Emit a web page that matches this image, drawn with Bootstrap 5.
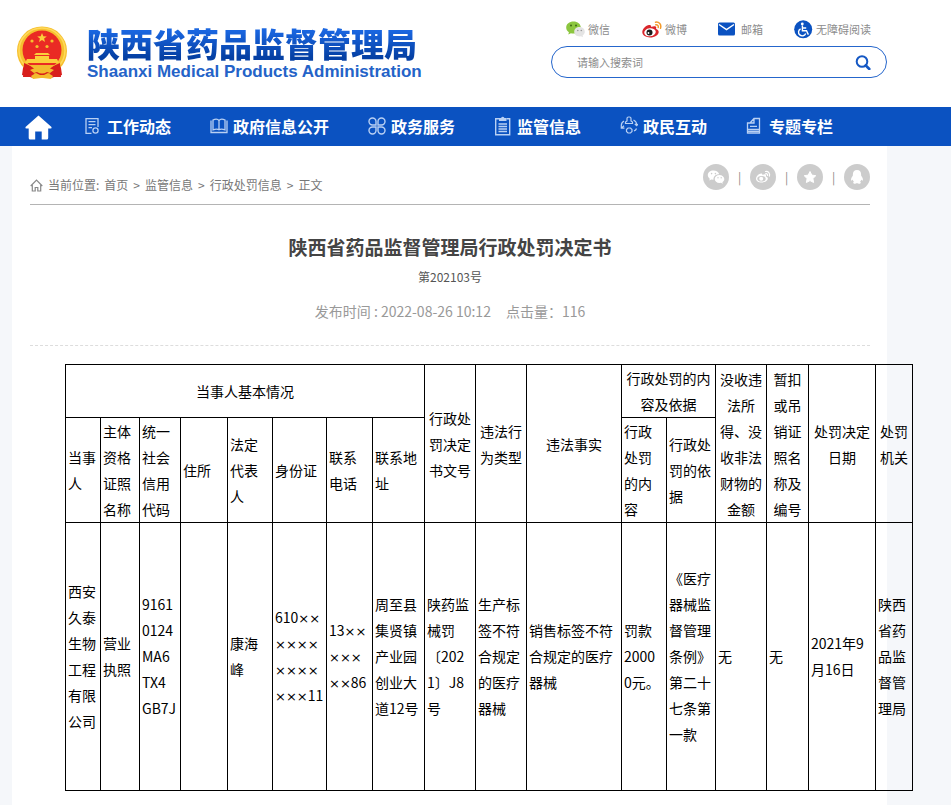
<!DOCTYPE html>
<html lang="zh-CN">
<head>
<meta charset="utf-8">
<meta name="viewport" content="width=device-width, initial-scale=1">
<title>陕西省药品监督管理局行政处罚决定书</title>
<link rel="stylesheet" href="https://cdn.jsdelivr.net/npm/bootstrap@5.3.0/dist/css/bootstrap.min.css">
<style>
:root { --brand: #0b52c1; }
body { font-family: "Noto Sans CJK SC", "Noto Sans", sans-serif; font-size: 14px; background: #f5f7fa; color: #000; }
a { text-decoration: none; color: inherit; }
svg { display: block; flex: none; }
.site-head { padding: 17px 64px 26px 17px; }
.brand-link { gap: 20px; }
.brand-link svg { margin-top: 8px; }
.brand-text { padding-top: 6px; }
.brand-cn { font-size: 33px; font-weight: 900; line-height: 40px; background: linear-gradient(#1a66e0 20%, #0540a4 85%); -webkit-background-clip: text; background-clip: text; color: transparent; }
.brand-en { font-family: "Liberation Sans", Arial, sans-serif; font-size: 17px; font-weight: 700; line-height: 18px; color: #2463c8; }
.head-tools { width: 336px; }
.quick-links { padding-left: 15px; font-size: 11px; line-height: 24px; color: #8c8c8c; }
.quick-links a { width: 76px; gap: 3px; white-space: nowrap; }
.search-box { margin-top: 5px; height: 32px; border: 1px solid #2566cc; border-radius: 16px; padding: 0 15px 0 25px; background: #fff; }
.search-box input { font-size: 11px; padding: 0; border: 0; background: none; box-shadow: none; }
.search-box input:focus { box-shadow: none; background: none; }
.search-box input::placeholder { color: #8c8c8c; }
.main-nav { background: var(--brand); color: #fff; height: 39px; padding: 0 0 2px 25px; gap: 39px; font-size: 16px; font-weight: 700; white-space: nowrap; }
.main-nav .home-link { margin-right: -8px; padding-top: 3px; }
.main-nav a { gap: 5px; }
.sheet { margin: 0 64px 0 12px; padding: 0 17px 14px 18px; }
.crumb-bar { height: 59px; border-bottom: 1px solid #b4b4b4; }
.crumbs { padding-top: 20px; gap: 5px; font-size: 12px; color: #777; }
.share { padding-top: 3px; color: #888; }
.share button { border: 0; padding: 0; background: none; }
.share span { width: 21px; line-height: 26px; font-size: 12px; text-align: center; }
.doc-title { font-size: 19px; font-weight: 700; line-height: 28px; color: #444; margin: 28px 0 0; }
.doc-no { font-size: 12px; line-height: 20px; color: #555; margin: 6px 0 0; }
.doc-meta { font-size: 14px; line-height: 20px; color: #999; margin: 14px 0 0; padding-bottom: 24px; gap: 15px; border-bottom: 1px dashed #ddd; }
.case-table { margin: 18px 0 0 35px; width: 847px; table-layout: fixed; border-collapse: collapse; line-height: 26px; font-size: 14px; white-space: nowrap; }
.case-table th, .case-table td { border: 1px solid #000; padding: 0 2px; font-weight: 400; vertical-align: middle; }
.case-table thead th { text-align: center; }
.case-table thead th.sub { text-align: left; }
.case-table tbody td { height: 268px; padding-bottom: 2px; }
.mask { font-family: "DejaVu Sans", sans-serif; font-size: 13px; line-height: 1; }
.c35{width:35px}.c37{width:37px}.c39{width:39px}.c41{width:41px}.c42{width:42px}.c45{width:45px}.c46{width:46px}.c47{width:47px}.c49{width:49px}.c51{width:51px}.c52{width:52px}.c54{width:54px}.c67{width:67px}.c95{width:95px}
</style>
<script src="https://cdn.jsdelivr.net/npm/bootstrap@5.3.0/dist/js/bootstrap.bundle.min.js"></script>
</head>
<body class="d-flex flex-column min-vh-100">
<header class="site-head bg-white d-flex justify-content-between align-items-start">
  <a href="#" class="brand-link d-flex align-items-start">
    <svg width="50" height="55" viewBox="0 0 50 55" aria-hidden="true">
      <path d="M7 36 5 50l8 2 3 1h18l3-1 8-2-2-14z" fill="#d81f1c"/>
      <ellipse cx="25" cy="26" rx="25" ry="24.500" fill="#f6c02f"/>
      <ellipse cx="25" cy="25.500" rx="23" ry="22.500" fill="none" stroke="#ffd95a" stroke-width="1.500"/>
      <ellipse cx="25" cy="25" rx="19.500" ry="19.500" fill="#ea2a24"/>
      <path d="M7 38q6 2 11 6l7-2 7 2q5-4 11-6l1 14-8 0-4-4-4 5H22l-4-5-4 4-8 0z" fill="#d81f1c"/>
      <path d="m25 8 1.300 3.200 3.500.2-2.700 2.200.9 3.400-3-1.900-3 1.900.9-3.400-2.700-2.200 3.500-.2z" fill="#fbcf3b"/>
      <g fill="#f6c02f"><circle cx="15" cy="16" r="1.600"/><circle cx="35" cy="16" r="1.600"/><circle cx="20" cy="21.500" r="1.600"/><circle cx="30" cy="21.500" r="1.600"/></g>
      <path d="M19 28h12l2 2H17zM18 31h14v3h8l2 4H8l2-4h8z" fill="#fbcf3b"/>
      <path d="M12 40h26l-6 4q-7-4-14 0zM18 43q7-4 14 0l5 2-4 3-3-1q-5 3-10 0l-3 1-4-3zM14 51l5-3 4 2h4l4-2 5 3-2 3-8-1h-2l-8 1z" fill="#f3bb2e"/>
    </svg>
    <span class="brand-text d-flex flex-column">
      <span class="brand-cn">陕西省药品监督管理局</span>
      <span class="brand-en">Shaanxi Medical Products Administration</span>
    </span>
  </a>
  <div class="head-tools">
    <nav class="quick-links d-flex" aria-label="快捷入口">
      <a href="#" class="d-flex align-items-center">
        <svg width="19" height="17" viewBox="0 0 19 17"><path d="M7.500.5C3.400.5.200 3 .200 6.500c0 2 1 3.600 2.700 4.700L2.300 13.500l2.600-1.300c4 1.200 9.500-1 9.900-5.500C14.800 3 11.600.500 7.500.500z" fill="#8cc63f"/><circle cx="5" cy="4.500" r="1" fill="#3d6b14"/><circle cx="10" cy="4.500" r="1" fill="#3d6b14"/><path d="M13.500 6c-3 0-5.300 2-5.300 4.700s2.400 4.700 5.300 4.700l1.500-.2 2 1-.4-1.800c1.300-.9 2.200-2.100 2.200-3.700 0-2.700-2.400-4.700-5.300-4.700z" fill="#e4e4e4"/><circle cx="11.800" cy="9.500" r=".8" fill="#999"/><circle cx="15.300" cy="9.500" r=".8" fill="#999"/></svg>
        <span>微信</span></a>
      <a href="#" class="d-flex align-items-center">
        <svg width="20" height="17" viewBox="0 0 20 17"><path d="M7 4C4 4 .300 8 .300 11.300.300 14.400 4 16.500 8 16.500c5 0 8.700-2.700 8.700-5.500 0-1.800-1.500-2.700-2.700-3 .5-1.200.3-2-.3-2.500-1-.7-3-.2-4.500.4C9.500 4.500 8.500 4 7 4z" fill="#d9252a"/><ellipse cx="8" cy="11.300" rx="5.800" ry="4" fill="#fff" transform="rotate(-8 8 11.300)"/><circle cx="7.500" cy="11.500" r="3" fill="#1c1c1c"/><circle cx="6.500" cy="12" r=".9" fill="#fff"/><path d="M13.500 1.200c3.500-.7 6.200 2.300 5 6M13.800 3.800c1.700-.3 2.900 1 2.400 2.700" fill="none" stroke="#f39a2b" stroke-width="1.500" stroke-linecap="round"/></svg>
        <span>微博</span></a>
      <a href="#" class="d-flex align-items-center">
        <svg width="20" height="14" viewBox="0 0 20 14"><rect y=".5" width="17" height="13" rx="1.500" fill="#0b52c1"/><path d="m1 2.500 7.500 5 7.500-5" fill="none" stroke="#fff" stroke-width="1.500"/></svg>
        <span>邮箱</span></a>
      <a href="#" class="d-flex align-items-center">
        <svg width="19" height="19" viewBox="0 0 19 19"><circle cx="9.200" cy="9.300" r="9" fill="#0b52c1"/><circle cx="8.300" cy="4" r="1.400" fill="#fff"/><path d="M8.400 5.500v5.200h4.100l1.900 3.900M8.500 8h3.700M6.600 8.800a3.700 3.700 0 1 0 5.100 4.600" fill="none" stroke="#fff" stroke-width="1.400"/></svg>
        <span>无障碍阅读</span></a>
    </nav>
    <form class="search-box d-flex align-items-center" role="search">
      <input class="form-control" type="text" placeholder="请输入搜索词" aria-label="请输入搜索词">
      <button type="button" class="btn p-0 border-0" aria-label="搜索"><svg width="16" height="15" viewBox="0 0 16 15"><circle cx="7" cy="6.500" r="5.300" fill="none" stroke="#1558c4" stroke-width="2"/><path d="m10.800 10.500 3.500 3.500" stroke="#1558c4" stroke-width="2.600" stroke-linecap="round"/></svg></button>
    </form>
  </div>
</header>
<nav class="main-nav d-flex align-items-center" aria-label="主导航">
  <a href="#" class="home-link" aria-label="首页"><svg width="28" height="25" viewBox="0 0 28 25"><path d="M13.500.500.500 12q-.5 1.500 1 1.500h2.200V23q0 1.500 1.500 1.500h5V16.500h6.500v8h5q1.500 0 1.500-1.500v-9.500h2.300q1.500 0 1-1.500z" fill="#fff"/></svg></a>
  <a href="#" class="d-flex align-items-center"><svg width="18" height="18" viewBox="0 0 18 18" fill="none" stroke="#b9d0f3" stroke-width="1.300"><path d="M7.500 16.300H2V13.500M2 13.500V1.700h12V10M4.500 4.700h7M4.500 7.700h7M4.500 10.700h3.500"/><circle cx="11.500" cy="13.500" r="2.600"/></svg><span>工作动态</span></a>
  <a href="#" class="d-flex align-items-center"><svg width="18" height="18" viewBox="0 0 18 18" fill="none" stroke="#b9d0f3" stroke-width="1.300"><path d="M1 3.500v12h16v-12M3 12.800V3q4-2 6 .5 2-2.500 6-.5v9.800q-4-1.500-6 0-2-1.500-6 0zM9 3.500v9.500"/></svg><span>政府信息公开</span></a>
  <a href="#" class="d-flex align-items-center"><svg width="18" height="18" viewBox="0 0 18 18" fill="none" stroke="#b9d0f3" stroke-width="1.400"><path d="M8 8H4.500A3.500 3.500 0 1 1 8 4.500zM10 8h3.500A3.500 3.500 0 1 0 10 4.500zM8 10H4.500A3.500 3.500 0 1 0 8 13.500zM10 10h3.500a3.500 3.500 0 1 1-3.500 3.500z"/></svg><span>政务服务</span></a>
  <a href="#" class="d-flex align-items-center"><svg width="18" height="20" viewBox="0 0 18 20" fill="none" stroke="#b9d0f3" stroke-width="1.400"><path d="M5 2.700H1.700v16h14v-16H12.500M4.500 8h8.500M4.500 10.500h8.500M4.500 13h8.500M4.500 15.500h8.500"/><path d="M5 5V2h2q1.700-2.500 3.500 0h2v3z" fill="#b9d0f3" stroke="none"/></svg><span>监管信息</span></a>
  <a href="#" class="d-flex align-items-center"><svg width="18" height="19" viewBox="0 0 18 19" fill="none" stroke="#b9d0f3" stroke-width="1.200"><path d="M5.500 7.500V6l1.500-1V2.500Q7 1 8.500 1h1Q11 1 11 2.500V5l1.500 1v1.500zM6.500 13.500l1.500-1.500h2.500l1.500 1.500v2L10.500 17H8l-1.500-1.500zM13.500 4q3.200 1.500 3.200 5M14.800 8l1.900 1.700L18 8M4 5Q1.300 6.500 1.300 9.500v2.700H4.500M1.300 12.200 4 9.800M14 15q2-.8 2.500-2.500"/></svg><span>政民互动</span></a>
  <a href="#" class="d-flex align-items-center"><svg width="18" height="18" viewBox="0 0 18 18" fill="none" stroke="#b9d0f3" stroke-width="1.300"><path d="M4 6 8 1.500h5.500V16H1.500V6zM4 6h4V1.500M1.500 12.500h12M4 9.300h7M1.500 14.300h12"/></svg><span>专题专栏</span></a>
</nav>
<main class="sheet bg-white flex-grow-1">
  <div class="crumb-bar d-flex justify-content-between align-items-center">
    <nav class="crumbs d-flex align-items-center" aria-label="当前位置">
      <svg width="13" height="13" viewBox="0 0 13 13" fill="none" stroke="#888" stroke-width="1.200"><path d="M.7 7 6.500 1.200 12.300 7M2.300 6v6h2.900V8.500h2.600V12h2.900V6"/></svg>
      <span>当前位置:</span><a href="#">首页</a><span>&gt;</span><a href="#">监管信息</a><span>&gt;</span><a href="#">行政处罚信息</a><span>&gt;</span><span>正文</span>
    </nav>
    <div class="share d-flex align-items-center">
      <button type="button" aria-label="分享到微信"><svg width="26" height="26" viewBox="0 0 26 26"><circle cx="13" cy="13" r="13" fill="#ccc"/><path d="M10.500 6.500c-3.300 0-5.700 2-5.700 4.600 0 1.600.8 2.800 2 3.700l-.5 1.700 2-1 2.200.3c-.3-3.500 2.500-5.600 5.700-5.500-.5-2.200-2.900-3.800-5.700-3.800z" fill="#fff"/><path d="M16.500 11c-2.700 0-4.800 1.700-4.800 4s2.100 4 4.800 4l1.500-.2 1.800 1-.4-1.600c1.200-.8 1.900-1.900 1.900-3.200 0-2.300-2.200-4-4.800-4z" fill="#fff"/><g fill="#ccc"><circle cx="8.600" cy="9.600" r=".8"/><circle cx="12.400" cy="9.600" r=".8"/><circle cx="15" cy="13.800" r=".7"/><circle cx="18.200" cy="13.800" r=".7"/></g></svg></button>
      <span>|</span>
      <button type="button" aria-label="分享到微博"><svg width="26" height="26" viewBox="0 0 26 26"><circle cx="13" cy="13" r="13" fill="#ccc"/><path d="M11 9.500c-2 0-5 2.900-5 5.300 0 2.200 2.600 3.800 5.500 3.800 3.600 0 6.300-1.900 6.300-4 0-1.300-1-2-2-2.200.4-.8.3-1.500-.1-1.800-.8-.6-2.100-.2-3.200.3 0-.9-.5-1.400-1.500-1.400z" fill="#fff"/><ellipse cx="11.500" cy="14.700" rx="4.200" ry="2.800" fill="#ccc"/><circle cx="11.200" cy="14.800" r="2" fill="#fff"/><path d="M15.500 7.500c2.800-.5 4.800 1.800 3.900 4.600M15.800 9.600c1.200-.2 2 .7 1.700 1.900" fill="none" stroke="#fff" stroke-width="1.200" stroke-linecap="round"/></svg></button>
      <span>|</span>
      <button type="button" aria-label="分享到空间"><svg width="26" height="26" viewBox="0 0 26 26"><circle cx="13" cy="13" r="13" fill="#ccc"/><path d="m13 7.500 1.800 3.600 4 .6-2.900 2.800.7 4-3.600-1.900-3.600 1.900.7-4-2.900-2.800 4-.6z" fill="#fff" stroke="#fff" stroke-width="1" stroke-linejoin="round"/></svg></button>
      <span>|</span>
      <button type="button" aria-label="分享到QQ"><svg width="26" height="26" viewBox="0 0 26 26"><circle cx="13" cy="13" r="13" fill="#ccc"/><path d="M13 6c-2.800 0-4.200 2-4.100 4.500l-.1 1.200c-1.300 1.600-1.900 3-1.700 4.700.6.300 1.200-.4 1.600-1 .2.900.6 1.600 1.200 2.200-.8.500-.9 1.400-.2 1.800.9.500 2.500.3 3.300-.4.800.7 2.400.9 3.300.4.700-.4.600-1.300-.2-1.800.6-.6 1-1.300 1.200-2.200.4.600 1 1.300 1.600 1 .2-1.700-.4-3.100-1.700-4.700l-.1-1.200C17.200 8 15.800 6 13 6z" fill="#fff"/></svg></button>
    </div>
  </div>
  <h1 class="doc-title text-center">陕西省药品监督管理局行政处罚决定书</h1>
  <p class="doc-no text-center">第202103号</p>
  <p class="doc-meta d-flex justify-content-center"><span>发布时间 : 2022-08-26 10:12</span><span>点击量：116</span></p>
  <table class="case-table">
    <colgroup><col class="c35"><col class="c39"><col class="c41"><col class="c47"><col class="c45"><col class="c54"><col class="c46"><col class="c52"><col class="c51"><col class="c51"><col class="c95"><col class="c45"><col class="c49"><col class="c51"><col class="c42"><col class="c67"><col class="c37"></colgroup>
    <thead>
      <tr>
        <th colspan="8">当事人基本情况</th>
        <th rowspan="2">行政处<br>罚决定<br>书文号</th>
        <th rowspan="2">违法行<br>为类型</th>
        <th rowspan="2">违法事实</th>
        <th colspan="2">行政处罚的内<br>容及依据</th>
        <th rowspan="2">没收违<br>法所<br>得、没<br>收非法<br>财物的<br>金额</th>
        <th rowspan="2">暂扣<br>或吊<br>销证<br>照名<br>称及<br>编号</th>
        <th rowspan="2">处罚决定<br>日期</th>
        <th rowspan="2">处罚<br>机关</th>
      </tr>
      <tr>
        <th class="sub">当事<br>人</th>
        <th class="sub">主体<br>资格<br>证照<br>名称</th>
        <th class="sub">统一<br>社会<br>信用<br>代码</th>
        <th class="sub">住所</th>
        <th class="sub">法定<br>代表<br>人</th>
        <th class="sub">身份证</th>
        <th class="sub">联系<br>电话</th>
        <th class="sub">联系地<br>址</th>
        <th class="sub">行政<br>处罚<br>的内<br>容</th>
        <th class="sub">行政处<br>罚的依<br>据</th>
      </tr>
    </thead>
    <tbody>
      <tr>
        <td>西安<br>久泰<br>生物<br>工程<br>有限<br>公司</td>
        <td>营业<br>执照</td>
        <td>9161<br>0124<br>MA6<br>TX4<br>GB7J</td>
        <td></td>
        <td>康海<br>峰</td>
        <td>610<span class="mask">××</span><br><span class="mask">××××</span><br><span class="mask">××××</span><br><span class="mask">×××</span>11</td>
        <td>13<span class="mask">××</span><br><span class="mask">×××</span><br><span class="mask">××</span>86</td>
        <td>周至县<br>集贤镇<br>产业园<br>创业大<br>道12号</td>
        <td>陕药监<br>械罚<br>〔202<br>1〕J8<br>号</td>
        <td>生产标<br>签不符<br>合规定<br>的医疗<br>器械</td>
        <td>销售标签不符<br>合规定的医疗<br>器械</td>
        <td>罚款<br>2000<br>0元。</td>
        <td>《医疗<br>器械监<br>督管理<br>条例》<br>第二十<br>七条第<br>一款</td>
        <td>无</td>
        <td>无</td>
        <td>2021年9<br>月16日</td>
        <td>陕西<br>省药<br>品监<br>督管<br>理局</td>
      </tr>
    </tbody>
  </table>
</main>
</body>
</html>
